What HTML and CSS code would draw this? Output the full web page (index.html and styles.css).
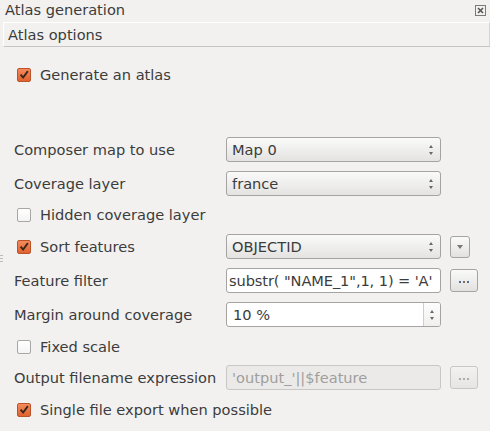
FILE: index.html
```html
<!DOCTYPE html>
<html>
<head>
<meta charset="utf-8">
<link rel="stylesheet" href="styles.css">
</head>
<body>
<div class="titlebar">
  <span class="title">Atlas generation</span>
  <span class="close"><svg width="11" height="11" viewBox="0 0 11 11"><rect x="0.5" y="0.5" width="10" height="10" fill="none" stroke="#7a7a7a"/><path d="M3 3 L8 8 M8 3 L3 8" stroke="#555" stroke-width="1.6"/></svg></span>
</div>
<div class="section-header">Atlas options</div>
<div class="grip"></div>
<div class="content">
  <label class="check-row gen"><span class="cb on"><svg width="14" height="14" viewBox="0 0 14 14"><path d="M3 6.5 L6 10 L11.5 2.5" fill="none" stroke="#3b261b" stroke-width="2.2"/></svg></span>Generate an atlas</label>

  <div class="row first">
    <span class="label">Composer map to use</span>
    <div class="combo"><span>Map 0</span><span class="arrows"><i class="up"></i><i class="down"></i></span></div>
  </div>
  <div class="row">
    <span class="label">Coverage layer</span>
    <div class="combo"><span>france</span><span class="arrows"><i class="up"></i><i class="down"></i></span></div>
  </div>
  <label class="row check-row tight"><span class="cb"></span>Hidden coverage layer</label>
  <div class="row after-check">
    <label class="label check-label"><span class="cb on"><svg width="14" height="14" viewBox="0 0 14 14"><path d="M3 6.5 L6 10 L11.5 2.5" fill="none" stroke="#3b261b" stroke-width="2.2"/></svg></span>Sort features</label>
    <div class="combo"><span>OBJECTID</span><span class="arrows"><i class="up"></i><i class="down"></i></span></div>
    <div class="btn small"><i class="down dd"></i></div>
  </div>
  <div class="row">
    <span class="label">Feature filter</span>
    <div class="input"><span class="clip">substr( "NAME_1",1, 1) = 'A'</span></div>
    <div class="btn dots"><span class="d"></span><span class="d"></span><span class="d"></span></div>
  </div>
  <div class="row">
    <span class="label">Margin around coverage</span>
    <div class="input spin"><span class="val">10 %</span><span class="spinbtn"><i class="up"></i><i class="down"></i></span></div>
  </div>
  <label class="row check-row after-field"><span class="cb"></span>Fixed scale</label>
  <div class="row tight">
    <span class="label">Output filename expression</span>
    <div class="input disabled"><span>'output_'||$feature</span></div>
    <div class="btn dots disabled"><span class="d"></span><span class="d"></span><span class="d"></span></div>
  </div>
  <label class="row check-row after-field"><span class="cb on"><svg width="14" height="14" viewBox="0 0 14 14"><path d="M3 6.5 L6 10 L11.5 2.5" fill="none" stroke="#3b261b" stroke-width="2.2"/></svg></span>Single file export when possible</label>
</div>
</body>
</html>
```
FILE: styles.css
```css
html, body {
  margin: 0;
  padding: 0;
}
body {
  background: #f2f1f0;
  font-family: "DejaVu Sans", sans-serif;
  font-size: 14.6px;
  color: #3c3c3c;
  width: 490px;
  height: 431px;
  overflow: hidden;
  position: relative;
}
.titlebar {
  height: 20px;
  display: flex;
  align-items: center;
  justify-content: space-between;
  padding: 0 4px 0 5px;
  margin-top: -1px;
}
.close {
  display: flex;
  margin-top: 2px;
}
.section-header {
  margin-left: 3px;
  margin-top: 3px;
  height: 23px;
  line-height: 23px;
  padding-left: 4px;
  border-top: 1px solid #ffffff;
  border-left: 1px solid #ffffff;
  border-bottom: 1px solid #c8c6c4;
  border-right: 1px solid #d6d4d2;
}
.grip {
  position: absolute;
  left: 0;
  top: 255px;
  width: 3px;
  height: 8px;
  background: repeating-linear-gradient(#bdbbb9 0 1px, transparent 1px 3px);
}
.content {
  padding-left: 14px;
  display: flex;
  flex-direction: column;
}
.check-row {
  display: flex;
  align-items: center;
  height: 25px;
  padding-left: 3px;
}
.gen {
  margin-top: 15px;
}
.cb {
  width: 12px;
  height: 12px;
  border: 1px solid #a9a7a5;
  border-radius: 2px;
  background: linear-gradient(#ffffff, #f4f4f4);
  margin-right: 9px;
  display: flex;
  align-items: center;
  justify-content: center;
  flex: none;
}
.cb svg {
  display: block;
}
.cb.on {
  background: linear-gradient(#f58a5c, #e0622f);
  border-color: #b9532a;
}
.row {
  display: flex;
  align-items: center;
  height: 25px;
  margin-top: 9px;
}
.row.first {
  margin-top: 50px;
}
.row.tight {
  margin-top: 6px;
}
.row.after-check {
  margin-top: 7px;
}
.row.after-field {
  margin-top: 7px;
}
.label {
  width: 212px;
  flex: none;
}
.check-label {
  display: flex;
  align-items: center;
  padding-left: 3px;
  width: 209px;
}
.combo, .input {
  box-sizing: border-box;
  width: 215px;
  height: 25px;
  border: 1px solid #a6a4a2;
  border-radius: 3px;
  display: flex;
  align-items: center;
  justify-content: space-between;
  flex: none;
}
.combo {
  background: linear-gradient(#fafafa, #e4e3e2);
  padding: 0 7px 0 5px;
}
.input {
  background: #ffffff;
  padding-left: 2px;
  overflow: hidden;
}
.clip {
  white-space: nowrap;
  letter-spacing: -0.1px;
}
.input.disabled {
  background: #ebeae9;
  border-color: #c9c7c5;
  color: #a09e9c;
  padding-left: 5px;
}
.arrows, .spinbtn {
  display: flex;
  flex-direction: column;
  align-items: center;
  gap: 4px;
}
.up, .down {
  display: block;
  width: 0;
  height: 0;
  border-left: 2.5px solid transparent;
  border-right: 2.5px solid transparent;
}
.up {
  border-bottom: 3px solid #6a6866;
}
.down {
  border-top: 3px solid #6a6866;
}
.spin {
  padding: 0;
}
.val {
  padding-left: 6px;
}
.spinbtn {
  align-self: stretch;
  width: 16px;
  border-left: 1px solid #d0cecc;
  justify-content: center;
  background: linear-gradient(#fdfdfd, #f0efee);
}
.btn {
  box-sizing: border-box;
  border: 1px solid #a6a4a2;
  border-radius: 3px;
  background: linear-gradient(#fafafa, #e2e1e0);
  margin-left: 9px;
  display: flex;
  align-items: center;
  justify-content: center;
  flex: none;
}
.btn.small {
  width: 20px;
  height: 22px;
}
.dd {
  border-left-width: 3px;
  border-right-width: 3px;
  border-top-width: 4px;
  border-top-color: #7a7876;
}
.btn.dots {
  width: 28px;
  height: 23px;
  gap: 2px;
  padding-top: 3px;
}
.d {
  width: 2px;
  height: 2px;
  background: #4a6fa0;
}
.d:nth-child(2) {
  background: #8a6a4a;
}
.btn.disabled {
  background: linear-gradient(#f3f2f1, #e6e5e4);
  border-color: #c9c7c5;
}
.btn.disabled .d {
  background: #b0aeac;
}
```
